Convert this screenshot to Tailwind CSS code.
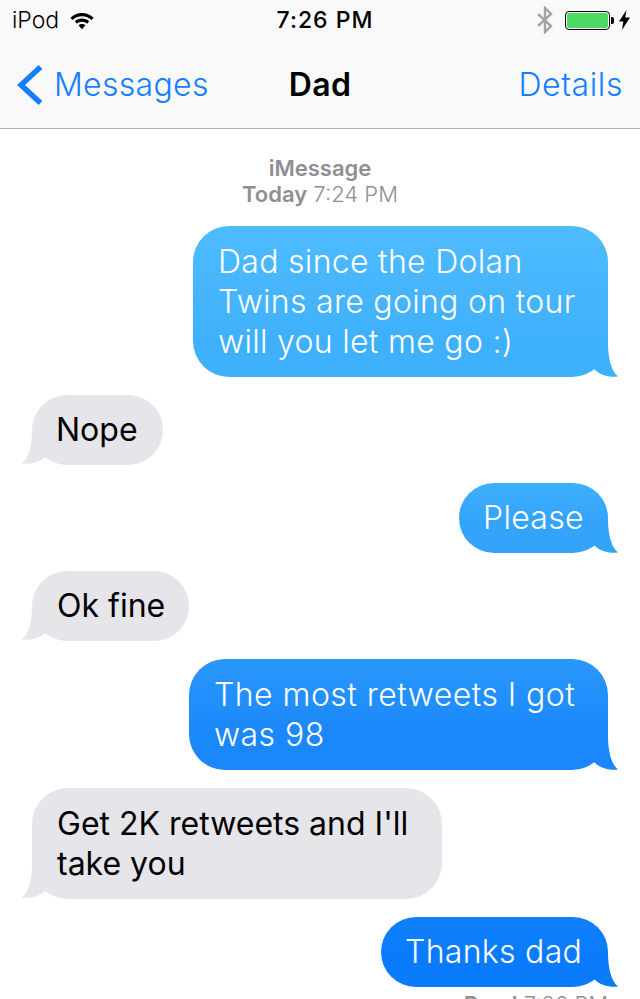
<!DOCTYPE html>
<html lang="en">
<head>
  <meta charset="UTF-8" />
  <meta name="viewport" content="width=device-width, initial-scale=1" />
  <title>Dad</title>
  <script src="https://cdn.jsdelivr.net/npm/@tailwindcss/browser@4"></script>
</head>
<body class="w-[640px] h-[999px] overflow-hidden bg-white font-['Inter','Liberation_Sans',sans-serif]">
  <!-- top bars -->
  <header class="h-[129px] bg-[#f9f9f9] border-b border-[#b2b2b2]">
    <div class="h-[40px] grid grid-cols-3 items-center pl-[12px] pr-[10px] text-black">
      <div class="flex items-center gap-[10px] text-[23px] font-light">
        <span>iPod</span>
        <svg width="26" height="19" viewBox="0 0 24 18" fill="#000">
          <path d="M12 2C7.800 2 4 3.600 1 6.300l2 2.200C5.400 6.300 8.500 5 12 5s6.600 1.300 9 3.500l2-2.200C20 3.600 16.200 2 12 2z"/>
          <path d="M12 7.200c-2.600 0-5 1-6.800 2.600l2 2.200c1.300-1.100 3-1.800 4.800-1.800s3.500.7 4.800 1.800l2-2.200C17 8.200 14.600 7.200 12 7.200z"/>
          <path d="M12 12.300c-1.300 0-2.400.5-3.300 1.200L12 17.200l3.300-3.700c-.9-.7-2-1.200-3.300-1.200z"/>
        </svg>
      </div>
      <div class="pl-[8px] text-center text-[23px] font-medium tracking-[1px] whitespace-nowrap">7:26 PM</div>
      <div class="flex items-center justify-end">
        <svg width="18" height="28" viewBox="0 0 18 28" fill="none" stroke="#a3a3a3" stroke-width="2.400" class="mr-[11px]">
          <path d="M2 8l13 12-6 6V2l6 6L2 20"/>
        </svg>
        <div class="w-[45px] h-[19px] rounded-[4px] border border-black p-[1px] bg-white"><div class="w-full h-full rounded-[2px] bg-[#4cd964]"></div></div>
        <div class="w-[3px] h-[7px] bg-black rounded-r-[2px] ml-[1px]"></div>
        <svg width="11" height="20" viewBox="0 0 11 20" fill="#000" class="ml-[5px]">
          <path d="M7.500 0L0 11.500h4.300L3 20l8-12.500H6.200z"/>
        </svg>
      </div>
    </div>
    <nav class="h-[88px] pt-[1px] grid grid-cols-3 items-center pl-[17px] pr-[17px] text-[32px] tracking-[0.3px]">
      <div class="flex items-center gap-[11px] text-[#157efb] font-light whitespace-nowrap">
        <svg width="26" height="42" viewBox="0 0 26 42" fill="none" stroke="#157efb" stroke-width="5.500" class="shrink-0">
          <path d="M23.500 3L4 21l19.500 18"/>
        </svg>
        <span>Messages</span>
      </div>
      <div class="text-center font-semibold text-black">Dad</div>
      <div class="text-right text-[#157efb] font-light tracking-[0.6px]">Details</div>
    </nav>
  </header>

  <main class="pt-[26px]">
    <div class="text-center text-[22px] leading-[26px] text-[#8e8e93]">
      <div class="font-semibold">iMessage</div>
      <div><span class="font-semibold">Today</span> <span class="font-light">7:24 PM</span></div>
    </div>

    <div class="mt-[19px] flex flex-col gap-[18px] px-[32px] text-[32px] leading-[40px]">
      <div class="relative self-end w-[415px] pl-[25px] pr-[20px] pt-[16px] pb-[15px] rounded-[36px] text-white font-light tracking-[0.3px] bg-linear-to-b from-[#4fbcff] to-[#3fb0fb] to-75%">
        Dad since the Dolan Twins are going on tour will you let me go :)
        <svg width="34" height="34" viewBox="0 0 34 34" class="absolute right-[-10px] bottom-0" fill="#3fb0fb"><path d="M24 0C24 14 27 28 34 33.500C26 34.500 17 33 10 26L0 10z"/></svg>
      </div>
      <div class="relative self-start w-[131px] pl-[24px] pr-[20px] py-[15px] rounded-[36px] text-black bg-[#e5e5ea]">
        Nope
        <svg width="34" height="34" viewBox="0 0 34 34" class="absolute left-[-10px] bottom-0" fill="#e5e5ea"><path d="M10 0C10 14 7 27 0 32.500C8 33.500 16 32 23 26L34 10z"/></svg>
      </div>
      <div class="relative self-end w-[149px] pl-[24px] pr-[20px] py-[15px] rounded-[36px] text-white font-light tracking-[0.3px] bg-linear-to-b from-[#3fb0fb] to-[#34a4fb] to-50%">
        Please
        <svg width="34" height="34" viewBox="0 0 34 34" class="absolute right-[-10px] bottom-0" fill="#34a4fb"><path d="M24 0C24 14 27 28 34 33.500C26 34.500 17 33 10 26L0 10z"/></svg>
      </div>
      <div class="relative self-start w-[157px] px-[25px] py-[15px] rounded-[36px] text-black whitespace-nowrap bg-[#e5e5ea]">
        Ok fine
        <svg width="34" height="34" viewBox="0 0 34 34" class="absolute left-[-10px] bottom-0" fill="#e5e5ea"><path d="M10 0C10 14 7 27 0 32.500C8 33.500 16 32 23 26L34 10z"/></svg>
      </div>
      <div class="relative self-end w-[419px] pl-[25px] pr-[20px] pt-[16px] pb-[15px] rounded-[36px] text-white font-light tracking-[0.45px] bg-linear-to-b from-[#2a98fb] to-[#1a87fb] to-70%">
        The most retweets I got was 98
        <svg width="34" height="34" viewBox="0 0 34 34" class="absolute right-[-10px] bottom-0" fill="#1a87fb"><path d="M24 0C24 14 27 28 34 33.500C26 34.500 17 33 10 26L0 10z"/></svg>
      </div>
      <div class="relative self-start w-[410px] px-[25px] pt-[16px] pb-[15px] rounded-[36px] text-black bg-[#e5e5ea]">
        Get 2K retweets and I'll take you
        <svg width="34" height="34" viewBox="0 0 34 34" class="absolute left-[-10px] bottom-0" fill="#e5e5ea"><path d="M10 0C10 14 7 27 0 32.500C8 33.500 16 32 23 26L34 10z"/></svg>
      </div>
      <div class="relative self-end w-[227px] pl-[24px] pr-[20px] py-[15px] rounded-[36px] text-white font-light tracking-[0.3px] whitespace-nowrap bg-linear-to-b from-[#1080fb] to-[#0a7cfb] to-50%">
        Thanks dad
        <svg width="34" height="34" viewBox="0 0 34 34" class="absolute right-[-10px] bottom-0" fill="#0a7cfb"><path d="M24 0C24 14 27 28 34 33.500C26 34.500 17 33 10 26L0 10z"/></svg>
      </div>
    </div>
    <div class="mt-[4px] pr-[32px] text-right text-[22px] leading-[26px] text-[#8e8e93]"><span class="font-semibold">Read</span> <span class="font-light">7:26 PM</span></div>
  </main>
</body>
</html>
